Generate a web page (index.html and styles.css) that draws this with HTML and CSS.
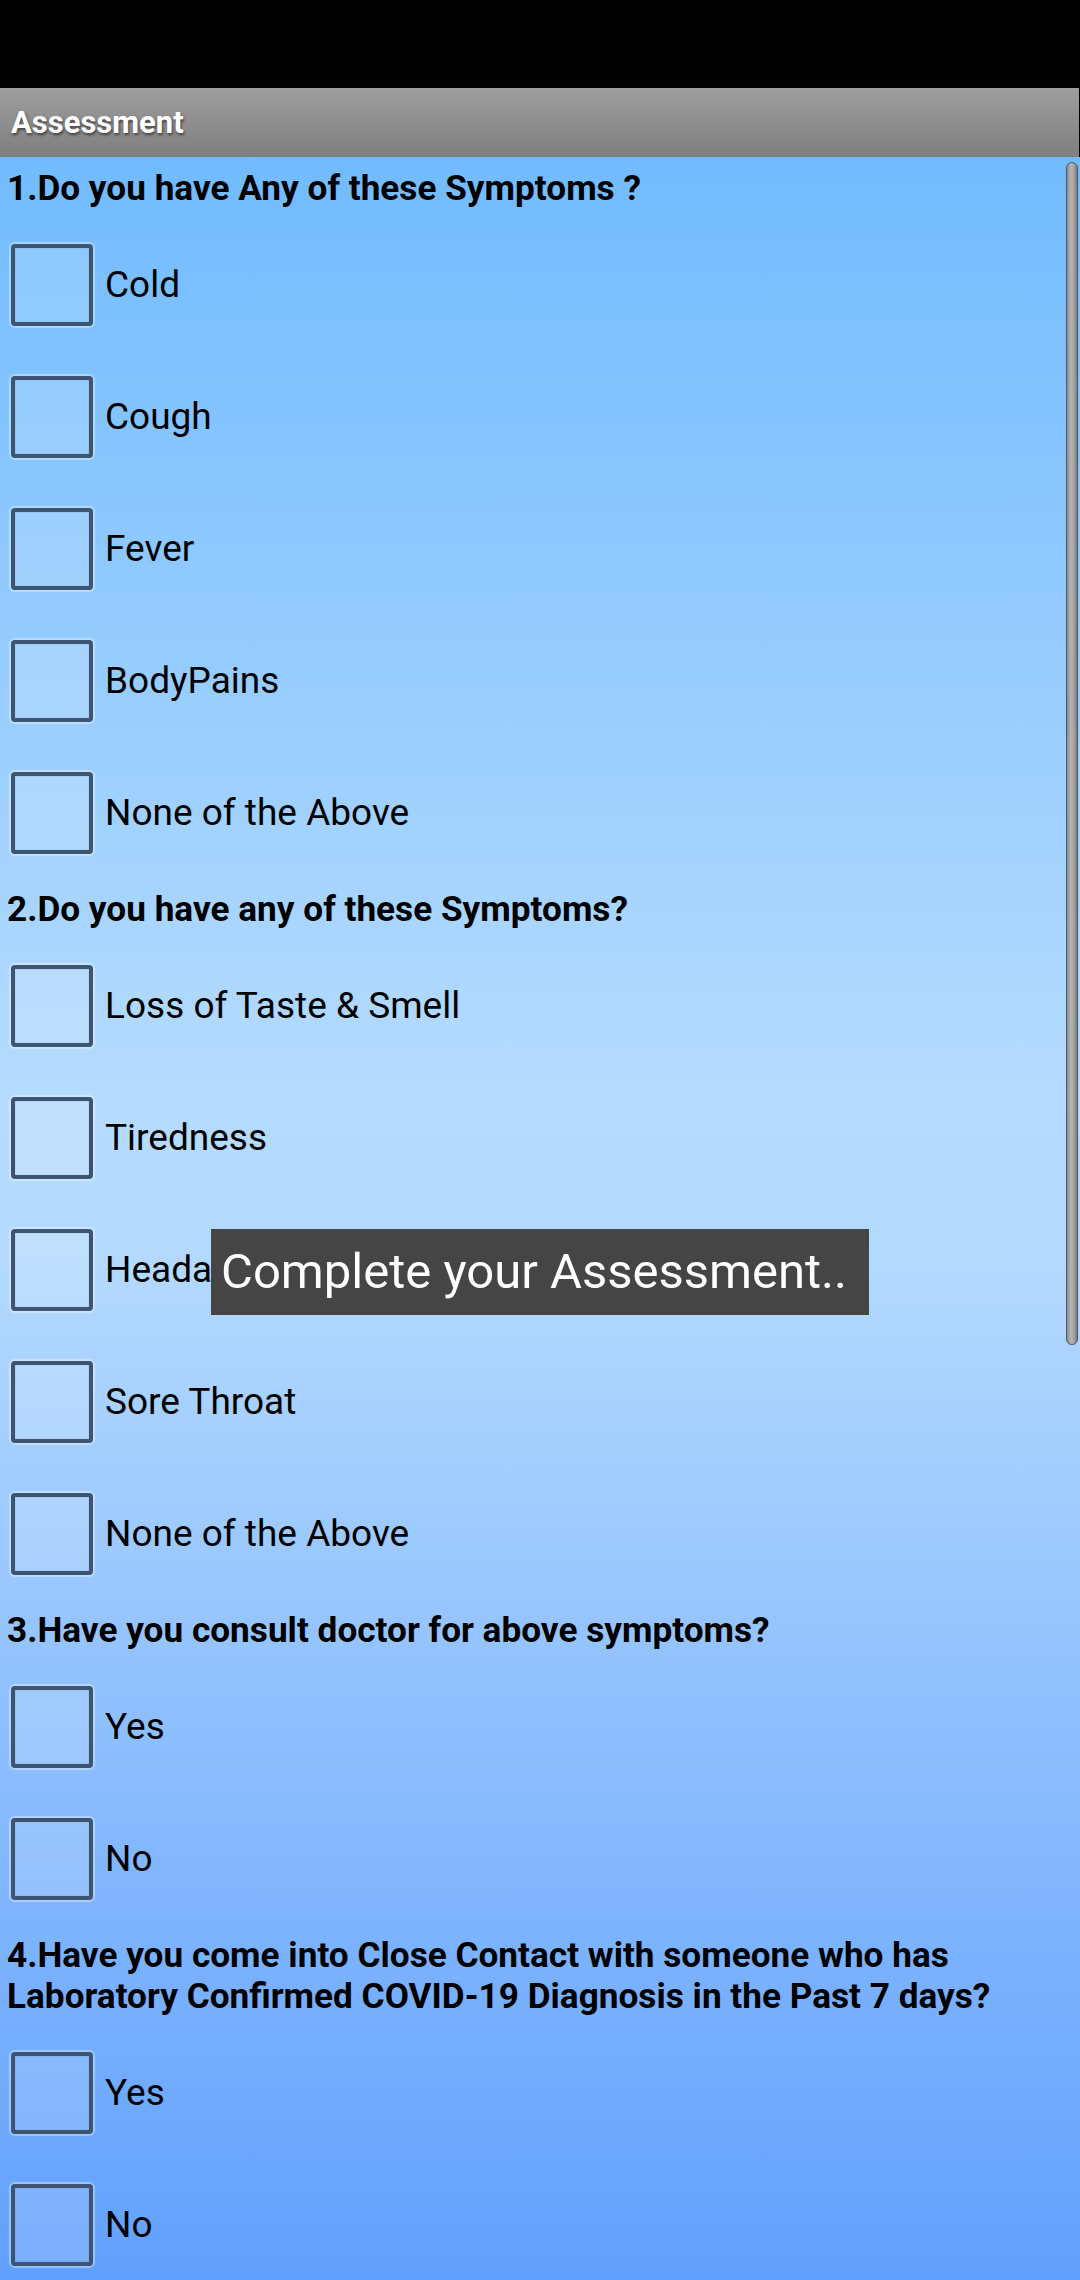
FILE: index.html
```html
<!DOCTYPE html>
<html>
<head>
<meta charset="utf-8">
<link rel="stylesheet" href="styles.css">
</head>
<body>
<div class="status"></div>
<div class="appbar"><span class="apptitle">Assessment</span></div>
<div class="content">
  <div class="q">1.Do you have Any of these Symptoms ?</div>
  <div class="row"><span class="box"></span><span class="lbl">Cold</span></div>
  <div class="row"><span class="box"></span><span class="lbl">Cough</span></div>
  <div class="row"><span class="box"></span><span class="lbl">Fever</span></div>
  <div class="row"><span class="box"></span><span class="lbl">BodyPains</span></div>
  <div class="row"><span class="box"></span><span class="lbl">None of the Above</span></div>
  <div class="q">2.Do you have any of these Symptoms?</div>
  <div class="row"><span class="box"></span><span class="lbl">Loss of Taste &amp; Smell</span></div>
  <div class="row"><span class="box"></span><span class="lbl">Tiredness</span></div>
  <div class="row"><span class="box"></span><span class="lbl">Headache</span></div>
  <div class="row"><span class="box"></span><span class="lbl">Sore Throat</span></div>
  <div class="row"><span class="box"></span><span class="lbl">None of the Above</span></div>
  <div class="q">3.Have you consult doctor for above symptoms?</div>
  <div class="row"><span class="box"></span><span class="lbl">Yes</span></div>
  <div class="row"><span class="box"></span><span class="lbl">No</span></div>
  <div class="q">4.Have you come into Close Contact with someone who has Laboratory Confirmed COVID-19 Diagnosis in the Past 7 days?</div>
  <div class="row"><span class="box"></span><span class="lbl">Yes</span></div>
  <div class="row"><span class="box"></span><span class="lbl">No</span></div>
  <div class="scrollbar"></div>
  <div class="toast">Complete your Assessment..</div>
</div>
</body>
</html>
```
FILE: styles.css
```css
html, body {
  margin: 0;
  padding: 0;
}
body {
  width: 1080px;
  height: 2280px;
  overflow: hidden;
  background: #000;
  font-family: Roboto, "Liberation Sans", sans-serif;
}
.status {
  height: 88px;
  background: #000;
}
.appbar {
  height: 69px;
  width: 1079px;
  background: linear-gradient(to bottom, #9d9d9d, #7f7f7f);
  display: flex;
  align-items: center;
  padding-left: 11px;
  box-sizing: border-box;
}
.apptitle {
  color: #fff;
  font-weight: bold;
  font-size: 31px;
  text-shadow: 1px 2px 3px rgba(0,0,0,0.55);
}
.content {
  position: relative;
  height: 2123px;
  background: linear-gradient(to bottom, #71bbfe 0%, #b5dbfe 44%, #b3d9fe 52%, #61a0fd 100%);
  overflow: hidden;
}
.q {
  font-weight: bold;
  font-size: 35.2px;
  line-height: 41px;
  padding: 10.5px 14px 9.5px 7px;
  color: #000;
}
.row {
  height: 132px;
  display: flex;
  align-items: center;
}
.box {
  width: 82px;
  height: 82px;
  margin-left: 11px;
  box-sizing: border-box;
  border: 4px solid #3e5571;
  border-radius: 4px;
  background: rgba(255,255,255,0.16);
  box-shadow: 0 0 1px 2px rgba(255,255,255,0.35), inset 0 0 1px rgba(0,0,0,0.4);
  margin-top: 2px;
}
.lbl {
  font-size: 37px;
  color: #000;
  margin-left: 12px;
}
.scrollbar {
  position: absolute;
  right: 2px;
  top: 5px;
  width: 12px;
  height: 1183px;
  box-sizing: border-box;
  border-radius: 6px;
  border: 1px solid #4d5866;
  background: linear-gradient(to right, #8d8d8d, #b5b5b5 40%, #a2a2a2 70%, #7a7a7a);
}
.toast {
  position: absolute;
  top: 1072px;
  left: 211px;
  width: 658px;
  height: 86px;
  box-sizing: border-box;
  background: #454545;
  color: #fff;
  font-size: 49px;
  line-height: 86px;
  padding-left: 10px;
  white-space: nowrap;
}
```
